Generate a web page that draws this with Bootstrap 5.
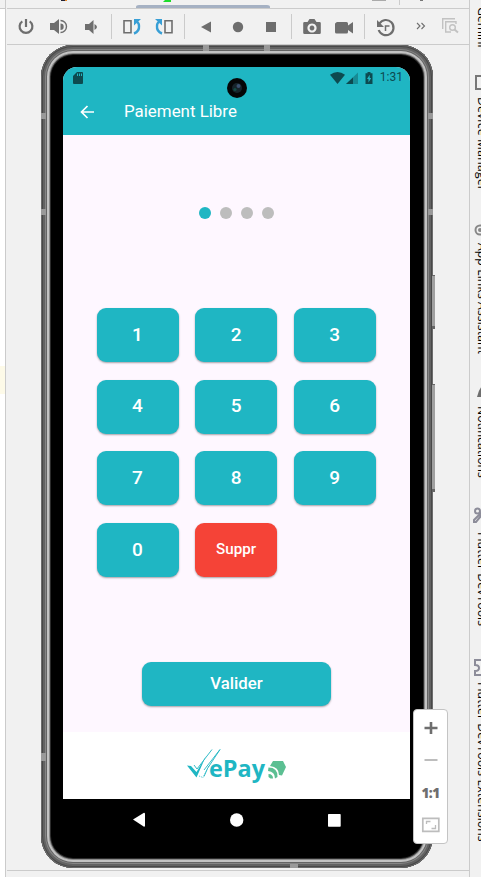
<!DOCTYPE html>
<html lang="fr">
<head>
<meta charset="utf-8">
<meta name="viewport" content="width=device-width, initial-scale=1">
<title>Paiement Libre</title>
<link href="https://cdn.jsdelivr.net/npm/bootstrap@5.3.0/dist/css/bootstrap.min.css" rel="stylesheet">
<style>
:root{--teal:#1fb6c3;--line:#cbcbcb;--ink:#6e6e6e}
body{width:481px;height:877px;background:#f1f1f1;font-family:Roboto,"Liberation Sans",sans-serif}
svg{display:block;flex:none}
.gutter{width:6px;border-right:1px solid var(--line);background:#fff}
.gutter-top{height:9px;background:#f1f1f1;border-bottom:1px solid var(--line)}
.gutter-mark{height:28px;margin-top:357px;background:#fdfae8}
.work{width:463px;padding-left:1px}
.tabs{height:9px;border-bottom:1px solid var(--line)}
.tools{height:36px;border-bottom:1px solid var(--line)}
.stage{height:826px;border-bottom:1px solid var(--line)}
.device{width:392px;height:823px;margin-left:34px;padding:22px 23px 0 22px;border-radius:32px;background:#000;
 box-shadow:inset 0 0 0 1px #6c6c6c,inset 0 0 0 2px #484848,inset 0 0 0 4px #626262,inset 0 0 0 5px #858585,inset 0 0 0 6px #646464,inset 0 0 0 8px #c2c2c2,inset 0 0 0 9px #8a8a8a,inset 0 0 0 10px #2c2c2c}
.sidekey{width:3px;left:391px;background:#a0a0a0;border:solid #666;border-width:1px 0 3px}
.k1{top:230px;height:54px}.k2{top:339px;height:108px}
.band{background:#999}
.band.v{width:5px;height:6px}.band.h{width:6px;height:6px;top:0}
.screen{width:347px;height:732px;border-radius:14px 14px 0 0;background:#fef7ff;overflow:hidden}
.appbar{height:68px;background:var(--teal);color:#fff}
.status{height:21px;color:#0d4a50;font-size:12px;line-height:21px;padding:0 7px 0 10px}
.titlebar{height:47px;padding-left:17px}
.titlebar h1{font-size:16.9px;font-weight:400;line-height:47px;margin-left:29px;padding-bottom:1px}
.lens{width:20px;height:20px;left:186px;top:33px}
.pins{padding-top:72px;height:173px;gap:9px}
.pin{width:12px;height:12px;margin:0 .1px;border-radius:50%;background:#bdbdbd}
.pin.on{background:var(--teal)}
.keys{display:grid;grid-template-columns:repeat(3,82px);gap:17.4px 16.6px;grid-auto-rows:54.2px;margin-left:33.5px}
.key{--bs-btn-padding-x:0;--bs-btn-padding-y:0;--bs-btn-border-width:0px;--bs-btn-border-radius:9px;--bs-btn-bg:var(--teal);--bs-btn-color:#fff;--bs-btn-font-size:19px;--bs-btn-font-weight:500;box-shadow:0 1px 2px rgba(0,0,0,.35)}
.key.del{--bs-btn-bg:#f54337;--bs-btn-font-size:15.2px}
.ok{width:189px;height:44px;margin:85px 0 0 79px;--bs-btn-font-size:16.8px}
.brandbar{height:67px;background:#fff;margin-top:26px;padding:15px 0 0 121px}
.navkeys{height:41px}
.zoombox{left:406px;top:664px;width:35px;height:135px;background:#fff;border:1px solid #c4c4c4;border-radius:4px;color:var(--ink)}
.one{font:800 13.5px/15px "Open Sans","Noto Sans",sans-serif;letter-spacing:-.5px}
.rail{width:12px;border-left:1px solid var(--line);font:12.2px/16px "Open Sans","Noto Sans",sans-serif;color:#000;overflow:hidden}
.tab{padding-left:3px;flex:none}
.tab span{writing-mode:vertical-rl;white-space:nowrap;display:block;width:16px;margin-left:1px}
</style>
</head>
<body class="overflow-hidden">
<div class="d-flex h-100">
 <div class="gutter flex-shrink-0"><div class="gutter-top"></div><div class="gutter-mark"></div></div>
 <main class="work flex-shrink-0">
  <div class="tabs"><svg width="462" height="8"><path d="M54 0h4v1h-4z" fill="#223"/><path d="M58 0h2v1h-2z" fill="#e68a2e"/><path d="M158 0h6v2h-8z" fill="#1bdc2b"/><path d="M129 8V7q0-2 3-2h128q3 0 3 2v1z" fill="#a5b1c3"/><path d="M365 0h14v1h-14z" fill="#aaa"/><path d="M392 0h1v5h-1z" fill="#ccc"/><path d="M413 0h3v1h-3z" fill="#777"/></svg></div>
  <div class="tools">
   <svg width="462" height="35" viewBox="7 9 462 35" fill="none" stroke="#6e6e6e">
    <path d="M22.300 21.300a6.400 6.400 0 1 0 7.400 0M26 19v8" stroke-width="2.200"/>
    <path d="M50 23h4l5-4v15l-5-4h-4z" fill="#6e6e6e" stroke="none"/><path d="M60.500 20.500a6 6 0 0 1 0 12" stroke-width="1.400"/><path d="M60.500 23.500a3.200 3.200 0 0 1 0 6.400z" fill="#6e6e6e" stroke="none"/>
    <path d="M85 24h4l4.500-4v14l-4.500-4h-4zM94.500 24q5 3 0 6z" fill="#6e6e6e" stroke="none"/>
    <path d="M111.500 14v25M184.500 14v25M291.500 14v25M364.500 14v25" stroke="#cbcbcb"/>
    <path d="M124 20.800h7v12h-7zM165 20.800h7v12h-7z" stroke-width="1.600"/>
    <g stroke="#389fd6" stroke-width="2.400"><path d="M134 33.500q5.500-2 5-7.500 0-3-2-4"/><path d="M162 33.500q-5.500-2-5-7.500 0-3 2-4"/><path d="M134 19h7l-7 6.500zM162 19h-7l7 6.500z" fill="#389fd6" stroke="none"/></g>
    <g fill="#6e6e6e" stroke="none"><path d="M201 27l10-5.500v11z"/><circle cx="238" cy="27" r="5.200"/><path d="M266 22h10v10h-10z"/>
    <path fill-rule="evenodd" d="M304.500 22h3l2-3h5l2 3h3q1.300 0 1.300 1.300v9.500q0 1.200-1.300 1.200h-15q-1.300 0-1.300-1.200v-9.500q0-1.300 1.300-1.300zM312 23.400a4.600 4.600 0 1 0 .01 0zM312 25.600a2.400 2.400 0 1 1-.01 0z"/>
    <path d="M336.500 22h10q1.500 0 1.500 1.500v2l5-3.500v11.500l-5-3.500v2q0 1.500-1.500 1.500h-10q-1.500 0-1.500-1.500v-8q0-1.500 1.500-1.500z"/><path d="M377 20v7h7z"/></g>
    <path d="M379.500 23.500a7.600 7.600 0 1 1-.8 6.500" stroke-width="2.200"/><path d="M385.500 31v-5h4" stroke-width="1.500"/>
    <path d="M417 23l3 3-3 3M421.500 23l3 3-3 3" stroke-width="1.100"/>
    <g stroke="#c2c2c2" stroke-width="1.400"><path d="M442.700 29V18.700H455M451 32h-5.300V21.700H456V24"/><circle cx="452.500" cy="27.500" r="2.800"/><path d="M454.500 29.500l3.500 3" stroke-width="2"/></g>
   </svg>
  </div>
  <div class="stage position-relative">
   <div class="device position-relative">
    <i class="sidekey k1 position-absolute"></i><i class="sidekey k2 position-absolute"></i>
    <i class="band v position-absolute" style="left:0;top:68px"></i><i class="band v position-absolute" style="left:0;top:164px"></i><i class="band v position-absolute" style="left:0;top:708px;height:8px"></i>
    <i class="band v position-absolute" style="left:387px;top:68px"></i><i class="band v position-absolute" style="left:387px;top:164px"></i>
    <i class="band h position-absolute" style="left:162px"></i><i class="band h position-absolute" style="left:223px"></i><i class="band h position-absolute" style="left:249px;top:819px;width:8px;height:4px"></i>
    <div class="screen">
     <header class="appbar">
      <div class="status d-flex align-items-center">
       <svg width="11" height="12"><path fill-rule="evenodd" fill="#0d4a50" d="M4 0h5q1 0 1 1v10q0 1-1 1H1q-1 0-1-1V4zM4 1.500v2.500h1V1.500zM6 1.500v2.500h1V1.500zM8 1.500v2.500h1V1.500z"/></svg>
       <svg class="ms-auto" width="46" height="14" fill="#0d4a50"><path d="M0 3.700q7.500-5.500 15 0L7.500 13z"/><path d="M28 1.500V13H16z" opacity=".4"/><path d="M23 6.500V13h-7z"/><path fill-rule="evenodd" d="M35.500 2.200h2V1h3v1.200h2V13h-7zM39.700 3.700L37 8h1.500v3.500L41.200 7h-1.500z"/></svg>
       <span class="ms-1">1:31</span>
      </div>
      <div class="titlebar d-flex align-items-center">
       <svg width="15" height="14" fill="none" stroke="#fff" stroke-width="1.700"><path d="M14 7H2M7.500 1L1.500 7l6 6"/></svg>
       <h1 class="mb-0">Paiement Libre</h1>
      </div>
     </header>
     <div class="pins d-flex justify-content-center"><i class="pin on"></i><i class="pin"></i><i class="pin"></i><i class="pin"></i></div>
     <div class="keys">
      <button class="btn key">1</button><button class="btn key">2</button><button class="btn key">3</button>
      <button class="btn key">4</button><button class="btn key">5</button><button class="btn key">6</button>
      <button class="btn key">7</button><button class="btn key">8</button><button class="btn key">9</button>
      <button class="btn key">0</button><button class="btn key del">Suppr</button>
     </div>
     <button class="btn key ok d-block">Valider</button>
     <footer class="brandbar">
      <svg width="106" height="42" viewBox="184 747 106 42">
       <path d="M187 765.500l4 .5 5.500 6L206 756l-9.500 21.500z" fill="#1fb6c3"/>
       <path d="M194 765l3 4 15-19.500M204 770l16-20.500-12.500 19-3.500 8" fill="none" stroke="#1fb6c3" stroke-width=".9"/><path d="M199 776l4 1.500 6-12" fill="none" stroke="#1fb6c3" stroke-width=".8" stroke-dasharray="1 1"/>
       <text x="209" y="777" textLength="56" lengthAdjust="spacingAndGlyphs" font-family="Open Sans,Noto Sans,sans-serif" font-weight="700" font-size="23" fill="#1fb6c3">ePay</text>
       <g fill="#5bbf92"><path d="M273 761h10l3 6-4 8.500-3-.5q0-8-9-9z"/><path d="M268.500 767.500q9.500 0 9 9.500l-2.500 1.500q0-7-7-7.500z"/><path d="M268.500 774q4.500 0 4.500 4.500h-2.500l-2-1.500z"/></g>
      </svg>
     </footer>
    </div>
    <svg class="lens position-absolute" viewBox="0 0 20 20"><circle cx="10" cy="10" r="10" fill="#050607"/><circle cx="10" cy="10" r="5" fill="#17242b"/><circle cx="11.500" cy="8" r="2" fill="#3b506f"/><circle cx="8" cy="11.500" r="1.600" fill="#134c46"/></svg>
    <div class="navkeys d-flex justify-content-center align-items-center">
     <svg width="220" height="20" fill="#fff"><path d="M6 9.500L17 2.800q1 0 1 1v12q0 1-1 1z"/><circle cx="109.700" cy="10" r="6.700"/><path d="M201.700 4H213q.7 0 .7.700V16q0 .7-.7.700h-11.300q-.7 0-.7-.7V4.700q0-.7.700-.7z"/></svg>
    </div>
   </div>
   <div class="zoombox position-absolute">
    <svg width="33" height="68" fill="none" stroke="#6e6e6e" stroke-width="2.600"><path d="M10.500 18h13M17 12v12"/><path d="M10.500 50h13" stroke="#bdbdbd" stroke-width="2"/></svg>
    <div class="one text-center pt-1 mt-1">1:1</div>
    <svg class="mt-3" width="33" height="20" fill="none" stroke="#bdbdbd"><path d="M8.800 1.300h16v13h-16z" stroke-width="1.700"/><path d="M12.500 7V4.500h4M21.500 8v3.500h-4" stroke-width="1.300"/></svg>
   </div>
  </div>
 </main>
 <aside class="rail flex-shrink-0 d-flex flex-column">
  <div class="tab" style="height:75px"><span style="margin-top:7px">Gemini</span></div>
  <div class="tab" style="height:148px"><svg width="20" height="22" fill="none" stroke="#777" stroke-width="2"><path d="M9 14H3V1h12"/></svg><span style="letter-spacing:.2px">Device Manager</span></div>
  <div class="tab" style="height:160px"><svg width="20" height="20" fill="none" stroke="#888" stroke-width="2"><circle cx="7" cy="7" r="4.500"/><circle cx="7" cy="7" r="1"/></svg><span style="letter-spacing:.1px">App Links Assistant</span></div>
  <div class="tab" style="height:122px"><svg width="20" height="23"><path d="M4 14Q6 4 12 1v13z" fill="#6e6e6e"/></svg><span>Notifications</span></div>
  <div class="tab" style="height:151px"><svg width="20" height="27" fill="none" stroke="#8c8c99" stroke-width="2"><circle cx="4.500" cy="6" r="2.500"/><path d="M6 8l6 6M12 6l-9 11h-2l0-2 9-9"/></svg><span style="letter-spacing:.1px">Flutter DevTools</span></div>
  <div class="tab"><svg width="20" height="26" fill="none" stroke="#8c8c99" stroke-width="2"><path d="M12 4H2v5q4 0 4 3t-4 3v4h10"/></svg><span style="letter-spacing:.1px">Flutter DevTools Extensions</span></div>
 </aside>
</div>
<script src="https://cdn.jsdelivr.net/npm/bootstrap@5.3.0/dist/js/bootstrap.bundle.min.js"></script>
</body>
</html>
